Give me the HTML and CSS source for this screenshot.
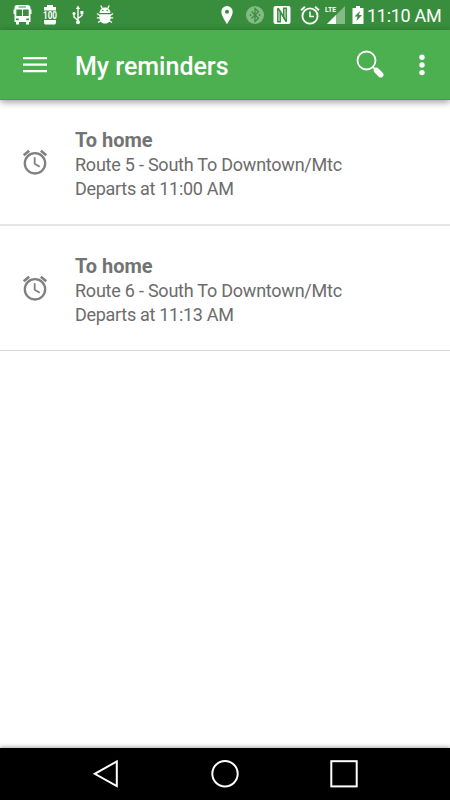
FILE: index.html
```html
<!DOCTYPE html>
<html lang="en">
<head>
<meta charset="utf-8">
<title>My reminders</title>
<link rel="stylesheet" href="styles.css">
</head>
<body>
<div class="screen">
  <div class="status">
    <div class="status-left">
      <svg class="bus" width="19" height="22" viewBox="0 0 19 22"><path fill="#fff" fill-rule="evenodd" d="M4 1h10q3.500 0 3.500 3v1.500h1V10h-1v8H16v2.500h-3V18H6v2.500H3V18H1.500v-8h-1V5.500h1V4Q1.500 1 4 1zM5.500 2.500v1h7.500v-1zM3.300 5.500V12H9V5.500zm6.700 0V12h5.700V5.500zM3 14.500v1.700h2.700v-1.700zm10.300 0v1.700H16v-1.700z"/></svg>
      <svg class="level" width="18" height="22" viewBox="0 0 18 22"><path fill="#fff" d="M6 1h6v2h3v3.500H3V3h3zM3 16h12v3l-1 1.500H4L3 19z"/><text x="2" y="15.200" textLength="14" lengthAdjust="spacingAndGlyphs" class="level-text">100</text></svg>
      <svg class="usb" width="12" height="22" viewBox="0 0 12 22"><path fill="none" stroke="#fff" stroke-width="1.400" d="M6 4v14M6 16.500L2 13V9.500M6 14.500L10 11.500V8"/><path fill="#fff" d="M6 1.500L8.200 5H3.800zM8.400 7h3v3h-3z"/><circle cx="2" cy="9.500" r="1.600" fill="#fff"/><circle cx="6" cy="18.300" r="2" fill="#fff"/></svg>
      <svg class="bug" width="18" height="22" viewBox="0 0 18 22"><path fill="none" stroke="#fff" stroke-width="1.300" d="M4.800 1.500l1.500 3M13.200 1.500l-1.500 3M1 9.500l3.500 2.500M17 9.500l-3.500 2.500M.8 13.800h16.400M2 18.500l4-2.500M16 18.500l-4-2.500"/><path fill="#fff" d="M3.500 9C3.500 1.500 14.500 1.500 14.500 9zM3.500 10.200h11v4c0 7-11 7-11 0z"/><circle cx="6.800" cy="6.500" r=".8" fill="#388e3c"/><circle cx="11.200" cy="6.500" r=".8" fill="#388e3c"/></svg>
    </div>
    <div class="status-right">
      <svg class="pin" width="12" height="20" viewBox="0 0 12 20"><path fill="#fff" fill-rule="evenodd" d="M6 1a5.700 5.700 0 0 0-5.700 5.700C.3 11 6 19 6 19s5.700-8 5.700-12.300A5.700 5.700 0 0 0 6 1zm0 3.700a2 2 0 1 1 0 4 2 2 0 0 1 0-4z"/></svg>
      <svg class="bt" width="18" height="20" viewBox="0 0 18 20"><circle cx="9" cy="10" r="9" fill="#85ba87"/><path fill="none" stroke="#388e3c" stroke-width="1.300" d="M5.500 6.500l7 6.800L9 16.500v-13l3.500 3.200-7 6.800"/><circle cx="4.500" cy="10" r=".9" fill="#388e3c"/><circle cx="13.500" cy="10" r=".9" fill="#388e3c"/></svg>
      <svg class="nfc" width="18" height="20" viewBox="0 0 18 20"><rect x=".5" y="1" width="17" height="18" rx="2" fill="#fff"/><path fill="none" stroke="#388e3c" stroke-width="1.500" d="M4.800 3.200v13.600h2.400V6.500M13.200 16.800V3.200h-2.400v10.300"/><path fill="none" stroke="#388e3c" stroke-width="1.700" d="M5 3.200l2.200 3.300 6 10"/></svg>
      <svg class="clock" width="20" height="20" viewBox="0 0 20 20"><g fill="none" stroke="#fff"><circle cx="10" cy="11" r="7.600" stroke-width="1.900"/><path stroke-width="1.500" d="M10 6.500V11.500h4"/><path stroke-width="1.900" d="M1 5.200L5 1.800M19 5.200L15 1.800"/></g></svg>
      <svg class="signal" width="20" height="20" viewBox="0 0 20 20"><path fill="#85ba87" d="M20 1v18H2z"/><path fill="#fff" d="M11 10v9H2z"/><path fill="#388e3c" d="M0 0h12v8H0z"/><text x="0" y="7" textLength="11" lengthAdjust="spacingAndGlyphs" class="lte">LTE</text></svg>
      <svg class="battery" width="12" height="20" viewBox="0 0 12 20"><path fill="#fff" d="M4 1h4v2h3.500v16H.5V3H4z"/><path fill="#388e3c" d="M8 6L2.500 11.500h3L4.500 16l5.500-6H7z"/></svg>
      <span class="time">11:10 AM</span>
    </div>
  </div>
  <header class="bar">
    <svg class="menu" width="24" height="18" viewBox="0 0 24 18"><path fill="#fff" d="M0 1h24v2.300H0zM0 7.500h24v2.300H0zM0 14h24v2.300H0z"/></svg>
    <h1>My reminders</h1>
    <svg class="search" width="30" height="30" viewBox="0 0 30 30"><circle cx="10.500" cy="10.500" r="9" fill="none" stroke="#fff" stroke-width="1.800"/><path stroke="#fff" stroke-width="2" d="M16.500 16.500l3 3"/><path stroke="#fff" stroke-width="5.500" stroke-linecap="round" d="M20.500 20.500l4.200 4.200"/></svg>
    <svg class="more" width="6" height="22" viewBox="0 0 6 22"><g fill="#fff"><circle cx="3" cy="3.300" r="2.700"/><circle cx="3" cy="11" r="2.700"/><circle cx="3" cy="18.600" r="2.700"/></g></svg>
  </header>
  <main>
    <div class="row">
      <svg class="alarm" width="26" height="26" viewBox="0 0 26 26"><g fill="none" stroke="#808080"><circle cx="13" cy="14.300" r="10.200" stroke-width="2.300"/><path stroke-width="1.800" d="M12.700 8.300v6.500l5 3"/><path stroke-width="2.600" d="M1.700 6.300l5.500-4.600M24.300 6.300l-5.500-4.600"/></g></svg>
      <div class="info"><h2>To home</h2><p>Route 5 - South To Downtown/Mtc</p><p>Departs at 11:00 AM</p></div>
    </div>
    <div class="row second">
      <svg class="alarm" width="26" height="26" viewBox="0 0 26 26"><g fill="none" stroke="#808080"><circle cx="13" cy="14.300" r="10.200" stroke-width="2.300"/><path stroke-width="1.800" d="M12.700 8.300v6.500l5 3"/><path stroke-width="2.600" d="M1.700 6.300l5.500-4.600M24.300 6.300l-5.500-4.600"/></g></svg>
      <div class="info"><h2>To home</h2><p>Route 6 - South To Downtown/Mtc</p><p>Departs at 11:13 AM</p></div>
    </div>
  </main>
  <nav class="nav">
    <svg width="28" height="30" viewBox="0 0 28 30"><path fill="none" stroke="#fff" stroke-width="2" d="M24.800 2.500v24.500L2.800 14.800z"/></svg>
    <svg width="28" height="30" viewBox="0 0 28 30"><circle cx="14" cy="14.800" r="12.700" fill="none" stroke="#fff" stroke-width="2"/></svg>
    <svg width="28" height="30" viewBox="0 0 28 30"><rect x="1.300" y="2.200" width="25.400" height="25.200" fill="none" stroke="#fff" stroke-width="2"/></svg>
  </nav>
</div>
</body>
</html>
```
FILE: styles.css
```css
* { box-sizing: border-box; }
body, h1, h2, p { margin: 0; }
body { font-family: Roboto, "Liberation Sans", sans-serif; background: #fff; }
svg { display: block; flex: none; }
.screen { width: 450px; height: 800px; display: flex; flex-direction: column; overflow: hidden; }
.status { height: 30px; background: #388e3c; display: flex; justify-content: space-between; align-items: center; padding: 0 9px 0 13px; flex: none; }
.status-left, .status-right { display: flex; align-items: center; }
.level { margin-left: 9px; overflow: visible; }
.usb { margin-left: 13px; }
.bug { margin-left: 12px; }
.level-text { font: 700 10px Roboto, sans-serif; fill: #fff; }
.bt { margin-left: 13px; }
.nfc { margin-left: 9px; }
.clock { margin-left: 9px; }
.signal { margin-left: 5px; }
.lte { font: 700 7.5px Roboto, sans-serif; fill: #fff; }
.battery { margin-left: 7px; }
.time { margin-left: 3px; width: 74px; font-size: 18px; letter-spacing: -.3px; line-height: 30px; color: #fff; white-space: nowrap; padding-top: 1px; }
.bar { height: 70px; flex: none; background: #4caf50; border-bottom: 1px solid #37a33b; display: flex; align-items: center; padding: 1px 25px 0 23px; box-shadow: 0 2px 7px rgba(0, 0, 0, .4); position: relative; }
.bar h1 { margin-left: 28px; font-size: 25px; line-height: 30px; font-weight: 500; color: #fff; padding-top: 3px; }
.search { margin-left: auto; }
.more { margin-left: 33px; }
main { flex: 1; }
.row { height: 126px; border-bottom: 2px solid #e6e6e6; display: flex; padding: 28px 0 0 22px; }
.second { height: 125px; border-bottom: 1px solid #d8d8d8; }
.alarm { margin-top: 21px; }
.info { margin-left: 27px; color: #6c6c6c; }
.info h2 { font-size: 20px; line-height: 24px; font-weight: 700; color: #737373; }
.info p { font-size: 18px; letter-spacing: -.23px; line-height: 24px; }
.info h2 + p { padding-top: 1px; }
.info p:last-child { letter-spacing: -.3px; }
.nav { height: 52px; flex: none; background: #000; display: flex; justify-content: center; align-items: center; gap: 91px; box-shadow: 0 -1px 4px rgba(0, 0, 0, .35); }
```
